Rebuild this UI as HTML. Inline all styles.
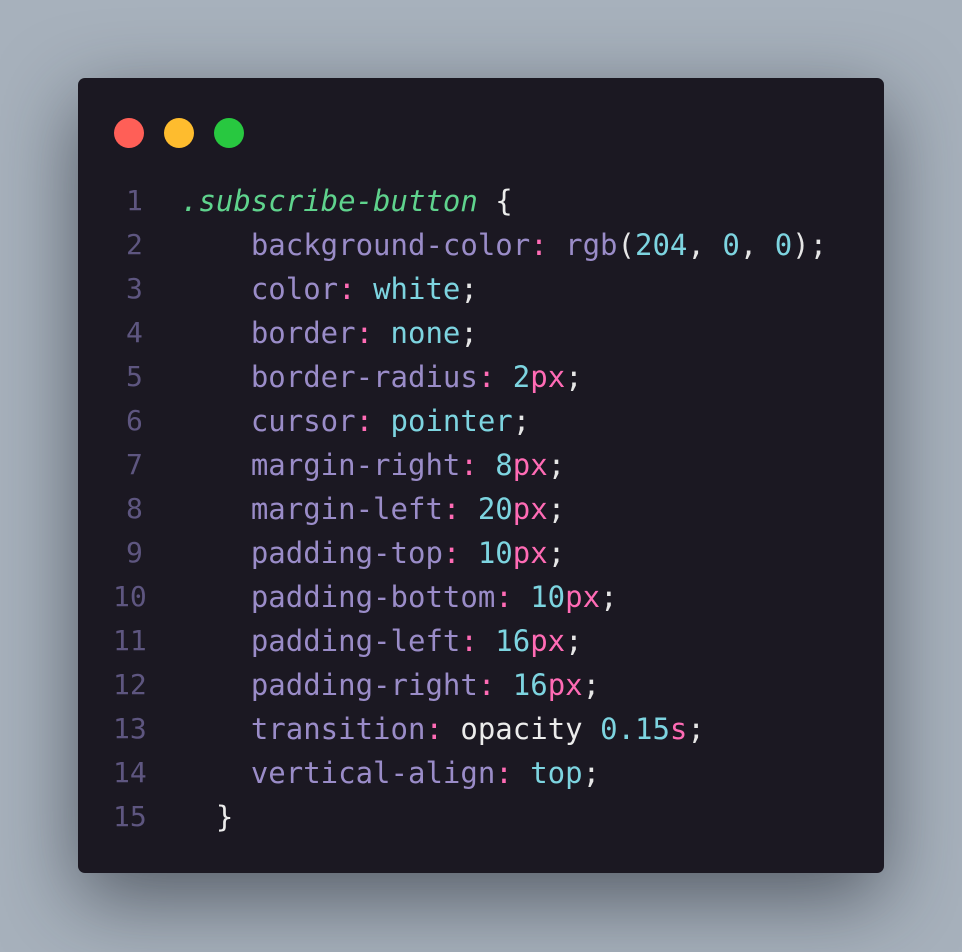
<!DOCTYPE html>
<html><head><meta charset="utf-8"><style>
html,body{margin:0;padding:0}
body{width:962px;height:952px;background:#a7b1bc;position:relative;overflow:hidden;font-family:"DejaVu Sans Mono","Liberation Mono",monospace}
.card{position:absolute;left:78px;top:78px;width:806px;height:795px;background:#1b1822;border-radius:7px;box-shadow:0 25px 80px rgba(30,35,45,0.6)}
.dot{position:absolute;top:118px;width:30px;height:30px;border-radius:50%}
.ln{position:absolute;font-size:28px;line-height:44px;color:#5e5680;white-space:pre}
.code{position:absolute;left:181px;font-size:29px;line-height:44px;white-space:pre;color:#e6e6e6}
.p{color:#9a8cc8}.c{color:#ff6bb5}.v{color:#7dd4e0}.u{color:#ff6bb5}.s{color:#5fd38d;font-style:italic}.w{color:#ececec}
</style></head><body>
<div class="card"></div>
<div class="dot" style="left:114px;background:#ff5f57"></div>
<div class="dot" style="left:164px;background:#febc2e"></div>
<div class="dot" style="left:214px;background:#28c840"></div>
<div class="ln" style="left:126px;top:179px">1
2
3
4
5
6
7
8
9</div>
<div class="ln" style="left:113px;top:575px">10
11
12
13
14
15</div>
<div class="code" style="top:179px"><span class="s">.subscribe-button</span> <span class="w">{</span>
    <span class="p">background-color</span><span class="c">:</span> <span class="p">rgb</span>(<span class="v">204</span>, <span class="v">0</span>, <span class="v">0</span>);
    <span class="p">color</span><span class="c">:</span> <span class="v">white</span>;
    <span class="p">border</span><span class="c">:</span> <span class="v">none</span>;
    <span class="p">border-radius</span><span class="c">:</span> <span class="v">2</span><span class="u">px</span>;
    <span class="p">cursor</span><span class="c">:</span> <span class="v">pointer</span>;
    <span class="p">margin-right</span><span class="c">:</span> <span class="v">8</span><span class="u">px</span>;
    <span class="p">margin-left</span><span class="c">:</span> <span class="v">20</span><span class="u">px</span>;
    <span class="p">padding-top</span><span class="c">:</span> <span class="v">10</span><span class="u">px</span>;
    <span class="p">padding-bottom</span><span class="c">:</span> <span class="v">10</span><span class="u">px</span>;
    <span class="p">padding-left</span><span class="c">:</span> <span class="v">16</span><span class="u">px</span>;
    <span class="p">padding-right</span><span class="c">:</span> <span class="v">16</span><span class="u">px</span>;
    <span class="p">transition</span><span class="c">:</span> <span class="w">opacity</span> <span class="v">0.15</span><span class="u">s</span>;
    <span class="p">vertical-align</span><span class="c">:</span> <span class="v">top</span>;
  <span class="w">}</span></div>
</body></html>
